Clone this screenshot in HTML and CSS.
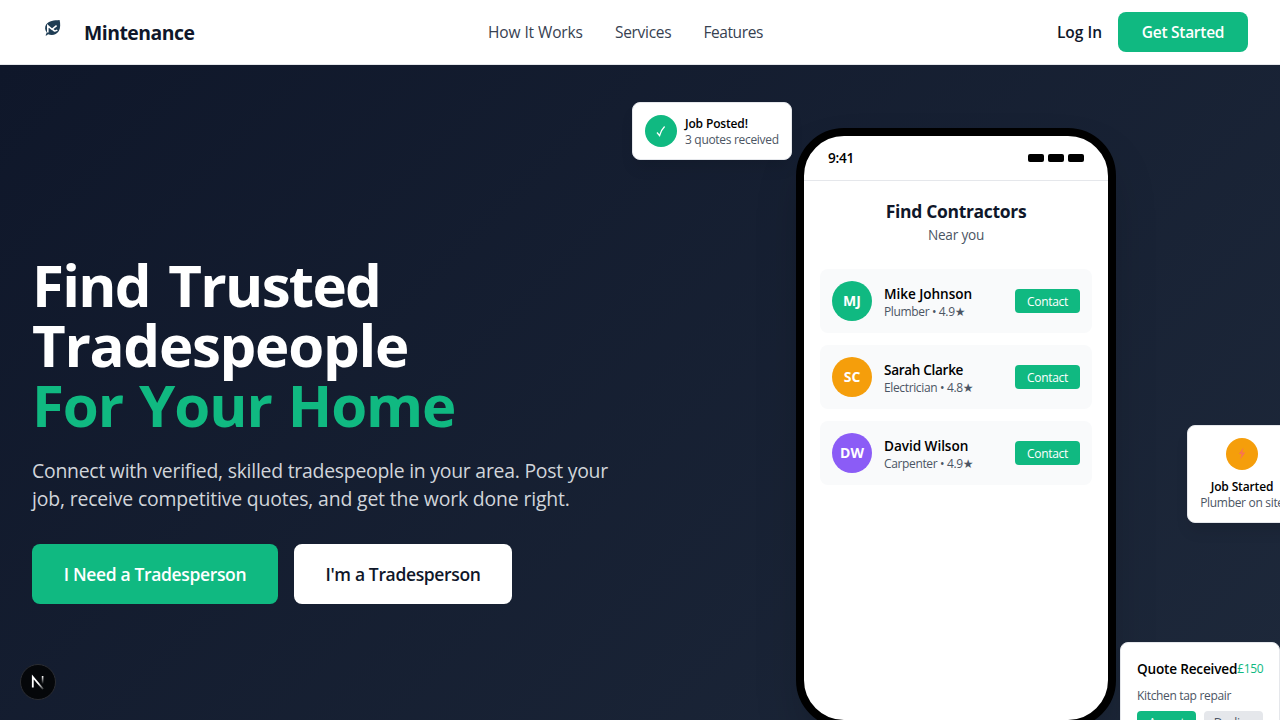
FILE: index.html
```html
<!DOCTYPE html>
<html lang="en">
<head>
<meta charset="utf-8">
<title>Mintenance</title>
<link rel="stylesheet" href="styles.css">
</head>
<body>
<header class="header">
  <a class="brand">
    <span class="brand-mark">
      <svg width="18" height="18" viewBox="0 0 18 18">
        <path d="M15.600 1C10 1.300 4.800 2 2.300 5.300C.5 8 .8 11 2.800 13.500L1.500 16.500C2.500 16.700 3.200 16 4 15.200C8 17 12.500 15.800 14.700 12.300C16.700 9 16.400 4.500 15.600 1Z" fill="#1f3d54"/>
        <path d="M3.800 13.500V6.800L8 10.300L12.600 6.600M8.600 9.800C9.200 12.300 11.500 12.500 13.300 11" fill="none" stroke="#fff" stroke-width="1.600"/>
      </svg>
    </span>
    <span class="brand-name">Mintenance</span>
  </a>
  <nav class="nav">
    <a class="nav-how">How It Works</a>
    <a class="nav-services">Services</a>
    <a class="nav-features">Features</a>
  </nav>
  <div class="actions">
    <a class="login">Log In</a>
    <a class="get-started">Get Started</a>
  </div>
</header>

<main class="hero">
  <section class="intro">
    <h1 class="headline">
      <span class="line-a">Find Trusted</span>
      <span>Tradespeople</span>
      <span class="accent">For Your Home</span>
    </h1>
    <p class="lead"><span class="lead-a">Connect with verified, skilled tradespeople in your area. Post your</span> <span class="lead-b">job, receive competitive quotes, and get the work done right.</span></p>
    <div class="cta">
      <a class="btn btn-primary">I Need a Tradesperson</a>
      <a class="btn btn-light">I'm a Tradesperson</a>
    </div>
  </section>

  <section class="showcase">
    <div class="phone">
      <div class="status">
        <span class="time">9:41</span>
        <span class="signals"><i></i><i></i><i></i></span>
      </div>
      <div class="screen">
        <h2 class="screen-title">Find Contractors</h2>
        <p class="screen-sub">Near you</p>
        <div class="list">
          <div class="person">
            <span class="avatar green">MJ</span>
            <div class="who"><b class="ls-mike">Mike Johnson</b><small>Plumber • 4.9★</small></div>
            <span class="contact">Contact</span>
          </div>
          <div class="person">
            <span class="avatar amber">SC</span>
            <div class="who"><b class="ls-sarah">Sarah Clarke</b><small>Electrician • 4.8★</small></div>
            <span class="contact">Contact</span>
          </div>
          <div class="person">
            <span class="avatar violet">DW</span>
            <div class="who"><b class="ls-david">David Wilson</b><small>Carpenter • 4.9★</small></div>
            <span class="contact">Contact</span>
          </div>
        </div>
      </div>
    </div>
  </section>

  <div class="float posted">
    <span class="badge green">
      <svg width="12" height="14" viewBox="0 0 12 14"><path d="M2 8.500L4.600 11.600C5.600 8 7 5 9.600 2.500" fill="none" stroke="#fff" stroke-width="1.300"/></svg>
    </span>
    <div class="note"><b>Job Posted!</b><small>3 quotes received</small></div>
  </div>

  <div class="float started">
    <span class="badge amber">
      <svg width="8" height="13" viewBox="0 0 8 13"><path d="M5.500 .5L.8 7H3.600L2.300 12.500L7.300 5.600H4.300Z" fill="#f97352"/></svg>
    </span>
    <div class="note"><b>Job Started</b><small>Plumber on site</small></div>
  </div>

  <div class="float quote">
    <div class="quote-head"><b>Quote Received</b><span>£150</span></div>
    <p class="quote-text">Kitchen tap repair</p>
    <div class="quote-actions"><span class="accept">Accept</span><span class="decline">Decline</span></div>
  </div>
</main>

<div class="dev-badge">
  <svg width="16" height="16" viewBox="0 0 16 16">
    <defs>
      <linearGradient id="diag" x1="9" y1="9" x2="13" y2="14" gradientUnits="userSpaceOnUse"><stop stop-color="#fff"/><stop offset="1" stop-color="#fff" stop-opacity=".3"/></linearGradient>
      <linearGradient id="stem" x1="0" y1="2" x2="0" y2="10" gradientUnits="userSpaceOnUse"><stop stop-color="#fff"/><stop offset="1" stop-color="#fff" stop-opacity="0"/></linearGradient>
    </defs>
    <path d="M2.800 13.500V3L13 15" fill="none" stroke="url(#diag)" stroke-width="1.800"/>
    <path d="M12.600 2V10H12.610" fill="none" stroke="url(#stem)" stroke-width="1.600"/>
  </svg>
</div>
</body>
</html>
```
FILE: styles.css
```css
* { box-sizing: border-box; margin: 0; padding: 0; }
html { overflow: hidden; }
body {
  height: 720px;
  overflow: hidden;
  background: #fff;
  font-family: "Open Sans", "Noto Sans", "DejaVu Sans", sans-serif;
  color: #000;
}
b { font-weight: 600; }

.header {
  height: 65px;
  padding: 0 32px;
  display: grid;
  grid-template-columns: 1fr auto 1fr;
  align-items: center;
  border-bottom: 1px solid #e5e7eb;
  background: #fff;
}
.brand { display: flex; align-items: center; gap: 12px; color: #0f172a; }
.brand-mark { width: 40px; height: 40px; padding: 7px 0 0 12px; }
.brand-mark svg { display: block; }
.brand-name { font-size: 19.4px; font-weight: 700; letter-spacing: -.5px; line-height: 28px; padding-top: 2px; }
.nav { display: flex; gap: 32px; font-size: 15.5px; color: #374151; margin-right: 29px; }
.nav-how { letter-spacing: -.11px; }
.nav-services { letter-spacing: -.28px; }
.nav-features { letter-spacing: -.4px; }
.actions { display: flex; justify-content: flex-end; align-items: center; gap: 16px; margin-left: -29px; font-size: 15.5px; font-weight: 600; }
.login { color: #0f172a; }
.get-started {
  width: 130px;
  height: 40px;
  line-height: 41px;
  text-align: center;
  border-radius: 8px;
  background: #10b981;
  color: #fff;
  letter-spacing: -.27px;
}

.hero {
  position: relative;
  height: 655px;
  padding: 0 32px;
  display: grid;
  grid-template-columns: 1fr 1fr;
  gap: 48px;
  background: linear-gradient(135deg, #0f172a, #1e293b) 0 0 / 100% 727px no-repeat;
  overflow: hidden;
}
.intro { padding-top: 190px; }
.headline { font-size: 58.2px; font-weight: 700; line-height: 60px; color: #fff; letter-spacing: -1.3px; white-space: nowrap; }
.headline span { display: block; }
.headline .line-a { letter-spacing: -1.7px; word-spacing: 5px; }
.headline .accent { color: #10b981; letter-spacing: -1.1px; word-spacing: 2px; }
.lead { margin-top: 22px; font-size: 19.4px; line-height: 28px; color: #d1d5db; white-space: nowrap; }
.lead span { display: block; }
.lead-a { letter-spacing: -.24px; }
.lead-b { letter-spacing: -.16px; }
.cta { display: flex; gap: 16px; margin-top: 31px; }
.btn { height: 60px; line-height: 60px; border-radius: 8px; text-align: center; font-size: 17.5px; font-weight: 600; letter-spacing: -.36px; }
.btn-primary { width: 246px; background: #10b981; color: #fff; }
.btn-light { width: 218px; background: #fff; color: #0f172a; }

.showcase { display: flex; justify-content: center; padding-top: 63px; }
.phone {
  flex: none;
  width: 320px;
  height: 600px;
  border: 8px solid #000;
  border-radius: 48px;
  background: #fff;
  overflow: hidden;
  box-shadow: 0 25px 50px -12px rgba(0, 0, 0, .25);
}
.status { height: 45px; padding: 0 24px; display: flex; justify-content: space-between; align-items: center; border-bottom: 1px solid #e5e7eb; }
.time { font-size: 13.6px; line-height: 20px; padding-bottom: 1px; font-weight: 600; letter-spacing: -.25px; }
.signals { display: flex; gap: 4px; }
.signals i { width: 16px; height: 8px; border-radius: 2px; background: #000; }
.screen { padding: 16px; }
.screen-title { font-size: 17.5px; line-height: 28px; letter-spacing: -.32px; text-align: center; color: #0f172a; }
.screen-sub { font-size: 13.6px; line-height: 20px; letter-spacing: -.2px; text-align: center; color: #4b5563; }
.list { display: grid; gap: 12px; margin-top: 24px; }
.person { height: 64px; padding: 12px; display: flex; align-items: center; gap: 12px; border-radius: 8px; background: #f9fafb; }
.avatar { width: 40px; height: 40px; border-radius: 50%; line-height: 40px; text-align: center; font-size: 14px; font-weight: 700; color: #fff; }
.green { background: #10b981; }
.amber { background: #f59e0b; }
.violet { background: #8b5cf6; }
.who { flex: 1; white-space: nowrap; padding-top: 1px; }
.who b, .who small { display: block; }
.who b { font-size: 13.6px; line-height: 19px; }
.who small { font-size: 12px; line-height: 17px; letter-spacing: -.36px; color: #4b5563; }
.ls-mike, .ls-david { letter-spacing: -.05px; }
.ls-sarah { letter-spacing: -.33px; }
.contact { width: 65px; height: 24px; border-radius: 4px; background: #10b981; color: #fff; font-size: 12px; line-height: 25px; letter-spacing: -.3px; text-align: center; }

.float { position: absolute; background: #fff; border: 1px solid #e5e7eb; border-radius: 8px; box-shadow: 0 10px 15px -3px rgba(0, 0, 0, .1); white-space: nowrap; }
.badge { width: 32px; height: 32px; flex: none; border-radius: 50%; display: flex; align-items: center; justify-content: center; }
.note { padding-top: 2px; }
.note b, .note small { display: block; font-size: 12px; line-height: 16px; }
.note b { letter-spacing: -.15px; }
.note small { color: #4b5563; letter-spacing: -.31px; }
.posted { left: 632px; top: 37px; width: 160px; height: 58px; padding: 0 12px; display: flex; align-items: center; gap: 8px; }
.started { left: 1187px; top: 359.500px; width: 110px; height: 98px; padding: 12px 0; display: flex; flex-direction: column; align-items: center; gap: 7px; }
.started .note { text-align: center; }
.quote { left: 1120px; top: 576.500px; width: 160px; height: 116px; padding: 16px; }
.quote-head { display: flex; justify-content: space-between; align-items: center; line-height: 20px; }
.quote-head b { font-size: 13.6px; letter-spacing: -.19px; }
.quote-head span { font-size: 12px; letter-spacing: -.35px; color: #10b981; }
.quote-text { margin-top: 9px; font-size: 12px; line-height: 16px; letter-spacing: -.33px; color: #4b5563; }
.quote-actions { display: grid; grid-template-columns: 1fr 1fr; gap: 8px; margin-top: 7px; font-size: 12px; line-height: 24px; text-align: center; }
.accept, .decline { border-radius: 4px; letter-spacing: -.25px; }
.accept { background: #10b981; color: #fff; }
.decline { background: #e5e7eb; color: #4b5563; }

.dev-badge {
  position: absolute;
  left: 20px;
  top: 664px;
  width: 36px;
  height: 36px;
  border-radius: 50%;
  border: 1px solid #2b2d33;
  background: #05070a;
  display: flex;
  align-items: center;
  justify-content: center;
}
```
